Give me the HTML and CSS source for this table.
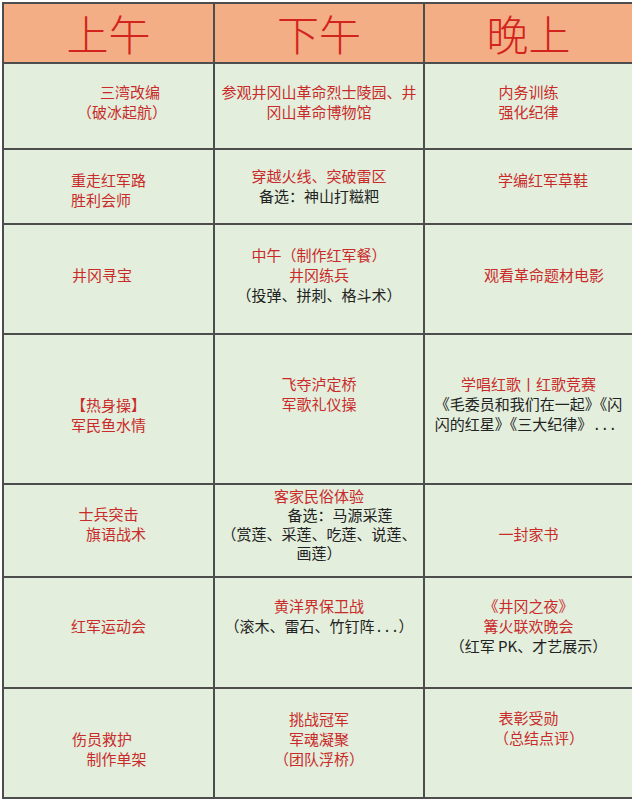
FILE: index.html
```html
<!DOCTYPE html>
<html lang="zh-CN">
<head>
<meta charset="utf-8">
<title>红色研学日程表</title>
<link rel="stylesheet" href="styles.css">
</head>
<body>
<div class="sheet">
  <div class="head">上午</div>
  <div class="head">下午</div>
  <div class="head">晚上</div>

  <!-- row 1 -->
  <div class="cell">
    <p class="ln red pl43">三湾改编</p>
    <p class="ln red pl27">（破冰起航）</p>
  </div>
  <div class="cell">
    <p class="ln red">参观井冈山革命烈士陵园、井</p>
    <p class="ln red">冈山革命博物馆</p>
  </div>
  <div class="cell">
    <p class="ln red">内务训练</p>
    <p class="ln red">强化纪律</p>
  </div>

  <!-- row 2 -->
  <div class="cell v-dn1">
    <div class="blk">
      <p class="ln red">重走红军路</p>
      <p class="ln red">胜利会师</p>
    </div>
  </div>
  <div class="cell v-mid">
    <p class="ln red">穿越火线、突破雷区</p>
    <p class="ln dark">备选：神山打糍粑</p>
  </div>
  <div class="cell v-up1">
    <p class="ln red pl29">学编红军草鞋</p>
  </div>

  <!-- row 3 -->
  <div class="cell">
    <p class="ln red pr13">井冈寻宝</p>
  </div>
  <div class="cell">
    <p class="ln red">中午（制作红军餐）</p>
    <p class="ln red">井冈练兵</p>
    <p class="ln dark">（投弹、拼刺、格斗术）</p>
  </div>
  <div class="cell">
    <p class="ln red pl31">观看革命题材电影</p>
  </div>

  <!-- row 4 -->
  <div class="cell v-dn2">
    <div class="blk">
      <p class="ln red">【热身操】</p>
      <p class="ln red">军民鱼水情</p>
    </div>
  </div>
  <div class="cell v-up2">
    <p class="ln red">飞夺泸定桥</p>
    <p class="ln red">军歌礼仪操</p>
  </div>
  <div class="cell">
    <p class="ln red">学唱红歌丨红歌竞赛</p>
    <div class="blk">
      <p class="ln dark">《毛委员和我们在一起》《闪</p>
      <p class="ln dark">闪的红星》《三大纪律》<span class="dots">...</span></p>
    </div>
  </div>

  <!-- row 5 -->
  <div class="cell v-up1">
    <p class="ln red">士兵突击</p>
    <p class="ln red pl15">旗语战术</p>
  </div>
  <div class="cell tight">
    <p class="ln red">客家民俗体验</p>
    <p class="ln dark pl42">备选：马源采莲</p>
    <p class="ln dark">（赏莲、采莲、吃莲、说莲、</p>
    <p class="ln dark">画莲）</p>
  </div>
  <div class="cell v-dn1">
    <p class="ln red">一封家书</p>
  </div>

  <!-- row 6 -->
  <div class="cell v-up1">
    <p class="ln red">红军运动会</p>
  </div>
  <div class="cell v-up2">
    <p class="ln red">黄洋界保卫战</p>
    <p class="ln dark">（滚木、雷石、竹钉阵<span class="dots">...</span>）</p>
  </div>
  <div class="cell v-up1">
    <p class="ln red">《井冈之夜》</p>
    <p class="ln red">篝火联欢晚会</p>
    <p class="ln dark">（红军 PK、才艺展示）</p>
  </div>

  <!-- row 7 -->
  <div class="cell v-dn2">
    <p class="ln red pr13">伤员救护</p>
    <p class="ln red pl16">制作单架</p>
  </div>
  <div class="cell">
    <p class="ln red">挑战冠军</p>
    <p class="ln red">军魂凝聚</p>
    <p class="ln red">（团队浮桥）</p>
  </div>
  <div class="cell v-up2">
    <p class="ln red">表彰受勋</p>
    <p class="ln red pl21">（总结点评）</p>
  </div>
</div>
</body>
</html>
```

FILE: styles.css
```css
html, body {
  margin: 0;
  padding: 0;
  background: #ffffff;
}

body {
  padding: 2px 0 0 2px;
  font-family: "Liberation Sans", "Noto Sans CJK SC", sans-serif;
}

.sheet {
  width: 626px;
  display: grid;
  grid-template-columns: 209px 208px 207px;
  grid-template-rows: 58px 84px 73px 108px 148px 91px 109px 108px;
  gap: 2px;
  padding: 2px;
  background: #4d4d4d;
}

.head {
  background: #f4ae86;
  color: #d2231c;
  font-family: "Noto Sans CJK SC", sans-serif;
  font-weight: 300;
  font-size: 42px;
  line-height: 58px;
  text-align: center;
}

.cell {
  background: #e3eedc;
  display: flex;
  flex-direction: column;
  justify-content: center;
  align-items: center;
  padding: 0 0 8px 0;
  box-sizing: border-box;
  font-family: "Noto Sans CJK SC", sans-serif;
  font-size: 15px;
  line-height: 20px;
  overflow: hidden;
}

.v-up2 { padding: 0 0 30px 0; }
.v-up1 { padding: 0 0 14px 0; }
.v-mid { padding: 0 0 2px 0; }
.v-dn1 { padding: 6px 0 0 0; }
.v-dn2 { padding: 12px 0 0 0; }

.tight {
  justify-content: flex-start;
  padding: 1px 0 0 0;
  line-height: 19px;
}

.ln {
  margin: 0;
  white-space: nowrap;
  text-align: center;
}

.blk {
  display: flex;
  flex-direction: column;
  align-items: flex-start;
}

.blk .ln { text-align: left; }

.red { color: #c92b2b; }
.dark { color: #222222; }

.dots {
  font-family: "Liberation Mono", monospace;
  letter-spacing: -1px;
}

.pl15 { padding-left: 15px; }
.pl16 { padding-left: 16px; }
.pl21 { padding-left: 21px; }
.pl27 { padding-left: 27px; }
.pl29 { padding-left: 29px; }
.pl31 { padding-left: 31px; }
.pl42 { padding-left: 42px; }
.pl43 { padding-left: 43px; }
.pr13 { padding-right: 13px; }
```
